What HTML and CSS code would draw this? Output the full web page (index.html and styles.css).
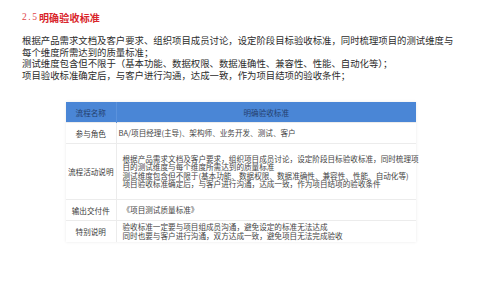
FILE: index.html
```html
<!DOCTYPE html>
<html lang="zh">
<head>
<meta charset="utf-8">
<link rel="stylesheet" href="styles.css">
</head>
<body>
<div class="page">
  <h1 class="title"><span class="num">2.5</span><span class="txt">明确验收标准</span></h1>
  <p class="intro">根据产品需求文档及客户要求、组织项目成员讨论，设定阶段目标验收标准，同时梳理项目的测试维度与<br>每个维度所需达到的质量标准；<br>测试维度包含但不限于（基本功能、数据权限、数据准确性、兼容性、性能、自动化等）；<br>项目验收标准确定后，与客户进行沟通，达成一致，作为项目结项的验收条件；</p>
  <table class="spec">
    <colgroup><col class="c1"><col class="c2"></colgroup>
    <thead>
      <tr class="r-head"><th>流程名称</th><th>明确验收标准</th></tr>
    </thead>
    <tbody>
      <tr class="r1"><td class="lbl">参与角色</td><td class="val tight">BA/项目经理(主导)、架构师、业务开发、测试、客户</td></tr>
      <tr class="r2"><td class="lbl">流程活动说明</td><td class="val">根据产品需求文档及客户要求，组织项目成员讨论，设定阶段目标验收标准，同时梳理项<br>目的测试维度与每个维度所需达到的质量标准<br>测试维度包含但不限于(基本功能、数据权限、数据准确性、兼容性、性能、自动化等)<br>项目验收标准确定后，与客户进行沟通，达成一致，作为项目结项的验收条件</td></tr>
      <tr class="r3"><td class="lbl">输出交付件</td><td class="val">《项目测试质量标准》</td></tr>
      <tr class="r4"><td class="lbl">特别说明</td><td class="val">验收标准一定要与项目组成员沟通，避免设定的标准无法达成<br>同时也要与客户进行沟通，双方达成一致，避免项目无法完成验收</td></tr>
    </tbody>
  </table>
</div>
</body>
</html>
```
FILE: styles.css
```css
html, body {
  margin: 0;
  padding: 0;
  background: #ffffff;
}
body {
  width: 499px;
  height: 281px;
  overflow: hidden;
  font-family: "Noto Sans CJK SC", "Noto Sans", sans-serif;
}
.page {
  padding: 11px 0 0 22px;
}
.title {
  margin: 0;
  height: 13px;
  line-height: 13px;
  font-size: 10px;
  font-weight: bold;
  color: #d9252b;
  display: flex;
  align-items: center;
}
.title .num {
  font-family: "Liberation Serif", serif;
  font-weight: normal;
  font-size: 9.5px;
  letter-spacing: 1.5px;
  color: #e0464a;
  margin-right: 0.5px;
}
.title .txt {
  letter-spacing: 0.2px;
}
.intro {
  margin: 11px 0 0 0;
  font-size: 9.4px;
  line-height: 11.5px;
  color: #2b2b2b;
  white-space: nowrap;
}
.spec {
  margin: 21px 0 0 44px;
  width: 350px;
  border-collapse: collapse;
  table-layout: fixed;
  font-size: 7.6px;
  color: #444;
  box-shadow: 0 0 3px rgba(0, 0, 0, 0.09);
}
.spec .c1 { width: 50px; }
.spec .c2 { width: 300px; }
.spec th {
  background: #4a86d6;
  color: #24406e;
  font-weight: normal;
  height: 20px;
  padding: 0;
  text-align: center;
}
.spec th:first-child {
  border-right: 1px solid #5b92dc;
}
.spec td {
  border-top: 1px solid #ececec;
  padding: 0;
  vertical-align: middle;
  white-space: nowrap;
}
.spec td.lbl {
  text-align: center;
  border-right: 1px solid #ececec;
  color: #3a3a3a;
}
.spec td.val {
  padding-left: 6px;
  line-height: 8.3px;
}
.spec td.val.tight {
  padding-left: 2px;
}
.spec .r1 td { height: 20px; }
.spec .r2 td { height: 55px; }
.spec .r3 td { height: 20px; }
.spec .r4 td { height: 21px; }
```
